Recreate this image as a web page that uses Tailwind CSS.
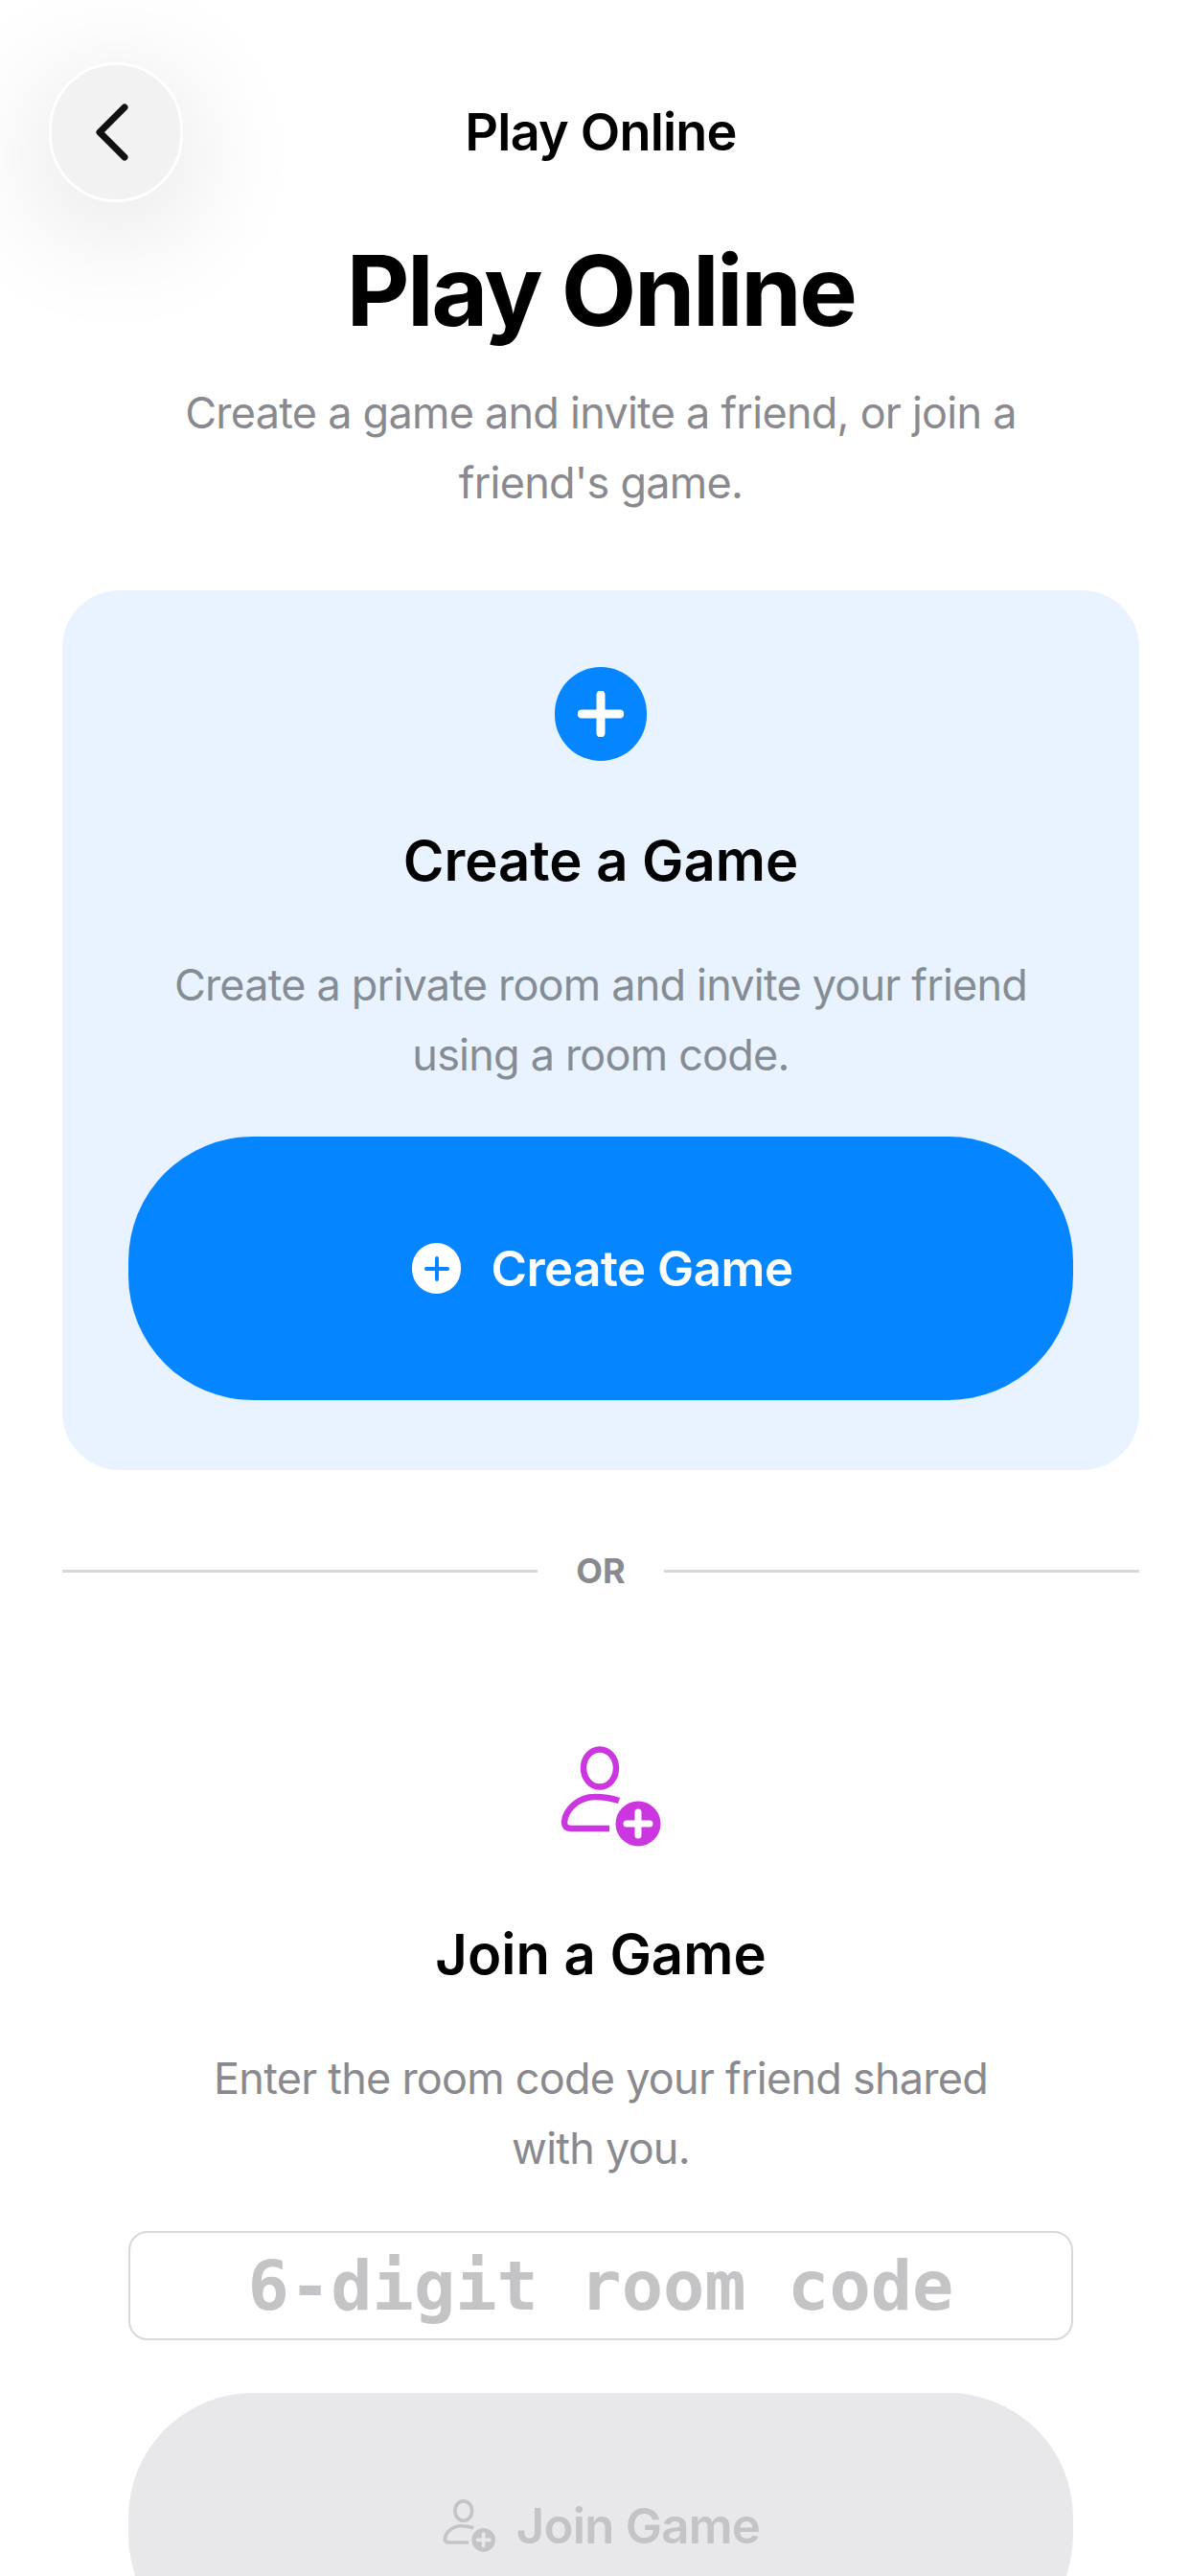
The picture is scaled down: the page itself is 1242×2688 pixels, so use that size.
<!DOCTYPE html>
<html lang="en">
<head>
    <meta charset="UTF-8">
    <title>Play Online</title>
    <meta name="viewport" content="width=device-width, initial-scale=1.0">
    <script src="https://cdn.jsdelivr.net/npm/@tailwindcss/browser@4"></script>
</head>
<body class="bg-white">
<div class="w-[1242px] h-[2688px] overflow-hidden flex flex-col pl-[65px] pr-[53px] font-['Inter',sans-serif]">

    <!-- nav bar -->
    <header class="grid grid-cols-[1fr_auto_1fr] items-center pt-[65px]">
        <button class="-ml-[14px] w-[140px] h-[146px] rounded-full bg-[#f2f2f2] border-[3px] border-white shadow-[0_24px_130px_rgba(0,0,0,0.14)] flex items-center justify-center">
            <svg class="w-[40px] h-[64px] -ml-[8px]" viewBox="0 0 40 64" fill="none" stroke="#111111" stroke-width="7" stroke-linecap="round" stroke-linejoin="round">
                <path d="M33 6 L7 32 L33 58"/>
            </svg>
        </button>
        <h2 class="text-[54px] leading-[66px] font-semibold tracking-[-0.8px] text-black">Play Online</h2>
        <div></div>
    </header>

    <h1 class="mt-[32px] text-center text-[102px] leading-[120px] font-bold tracking-[-2.5px] text-black">Play Online</h1>
    <p class="mt-[31px] text-center text-[45px] leading-[73px] tracking-[-0.75px] text-[#8a8a8e]">Create a game and invite a friend, or join a<br>friend's game.</p>

    <!-- create card -->
    <section class="mt-[76px] rounded-[60px] bg-[#e8f3ff] pt-[80px] pb-[73px] px-[69px] flex flex-col items-center">
        <div class="w-[96px] h-[98px] rounded-full bg-[#0585ff] flex items-center justify-center">
            <svg class="w-[48px] h-[48px]" viewBox="0 0 48 48" fill="none" stroke="#ffffff" stroke-width="9" stroke-linecap="round">
                <path d="M24 4 V44 M4 24 H44"/>
            </svg>
        </div>
        <h3 class="mt-[69px] text-[58px] leading-[70px] font-semibold text-black">Create a Game</h3>
        <p class="mt-[58px] text-center text-[45px] leading-[73px] tracking-[-0.8px] text-[#868c94]">Create a private room and invite your friend<br>using a room code.</p>
        <button class="mt-[49px] w-full h-[275px] rounded-[130px] bg-[#0585ff] flex items-center justify-center gap-[31px] pl-[4px]">
            <span class="w-[51px] h-[53px] rounded-full bg-white flex items-center justify-center">
                <svg class="w-[26px] h-[26px]" viewBox="0 0 26 26" fill="none" stroke="#0585ff" stroke-width="4" stroke-linecap="round">
                    <path d="M13 2 V24 M2 13 H24"/>
                </svg>
            </span>
            <span class="text-[51px] leading-[66px] font-semibold tracking-[-0.5px] text-white">Create Game</span>
        </button>
    </section>

    <!-- divider -->
    <div class="mt-[85px] h-[40px] flex items-center gap-[40px]">
        <div class="flex-1 h-[3px] bg-[#d6d6d8]"></div>
        <span class="text-[36px] leading-[40px] font-bold text-[#8a8a8e]">OR</span>
        <div class="flex-1 h-[3px] bg-[#d6d6d8]"></div>
    </div>

    <!-- join section -->
    <section class="flex flex-col items-center px-[69px]">
        <svg class="mt-[163px] w-[126px] h-[107px]" viewBox="24 33 126 107" fill="none" stroke="#cb36e0" stroke-width="6.5" stroke-linecap="round">
            <ellipse cx="86" cy="56" rx="17" ry="19.5"/>
            <path d="M106 90 C97 87 89 86 81 86 C63 86 50 100 49 112 C49 117 51 119 56 119 L96 119" stroke-linecap="butt"/>
            <circle cx="126" cy="114" r="23.5" fill="#cb36e0" stroke="none"/>
            <path d="M126 102 V126 M114 114 H138" stroke="#ffffff" stroke-width="7"/>
        </svg>
        <h3 class="mt-[75px] text-[58px] leading-[70px] font-semibold text-black">Join a Game</h3>
        <p class="mt-[58px] text-center text-[45px] leading-[73px] tracking-[-0.76px] text-[#8a8a8e]">Enter the room code your friend shared<br>with you.</p>
        <div class="mt-[50px] w-full h-[114px] rounded-[20px] border-2 border-[#d8d8dc] bg-white flex items-center justify-center">
            <span class="font-['DejaVu_Sans_Mono',monospace] font-bold text-[72px] leading-[80px] text-[#c4c4c6]">6-digit room code</span>
        </div>
        <button class="mt-[55px] w-full h-[278px] shrink-0 rounded-[130px] bg-[#e8e8ea] flex items-center justify-center gap-[21px]">
            <svg class="w-[57px] h-[56px]" viewBox="44 33 106 107" fill="none" stroke="#c4c4c6" stroke-width="7" stroke-linecap="round">
                <ellipse cx="86" cy="56" rx="17" ry="19.5"/>
                <path d="M106 90 C97 87 89 86 81 86 C63 86 50 100 49 112 C49 117 51 119 56 119 L96 119" stroke-linecap="butt"/>
                <circle cx="126" cy="114" r="23.5" fill="#c4c4c6" stroke="none"/>
                <path d="M126 102 V126 M114 114 H138" stroke="#e8e8ea" stroke-width="7"/>
            </svg>
            <span class="text-[51px] leading-[66px] font-semibold tracking-[-0.8px] text-[#c4c4c6]">Join Game</span>
        </button>
    </section>
</div>
</body>
</html>
